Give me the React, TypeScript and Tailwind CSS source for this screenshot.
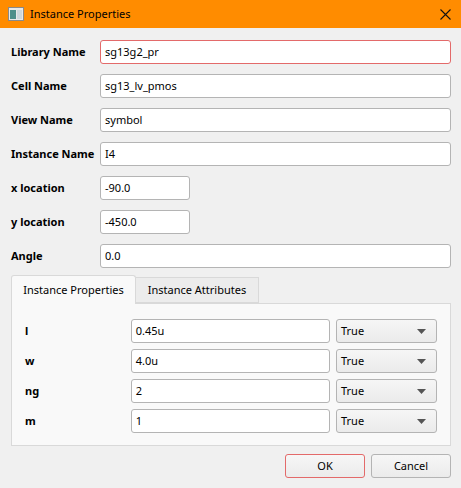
import React from 'react'

const font = { fontFamily: '"Segoe UI", "Noto Sans", "Open Sans", sans-serif' }

function Field({ value, width = 'flex-1', invalid = false }: { value: string; width?: string; invalid?: boolean }) {
  return (
    <div
      className={`${width} h-[24px] flex items-center px-[4px] bg-white rounded-[3px] border text-[11px] text-black whitespace-nowrap ${
        invalid ? 'border-[#e36a6a]' : 'border-[#b4b4b4]'
      }`}
    >
      {value}
    </div>
  )
}

function FormRow({ label, value, width, invalid }: { label: string; value: string; width?: string; invalid?: boolean }) {
  return (
    <div className="flex items-center h-[24px]">
      <div className="w-[89px] text-[11px] font-bold text-black whitespace-nowrap">{label}</div>
      <Field value={value} width={width} invalid={invalid} />
    </div>
  )
}

function Combo() {
  return (
    <div className="w-[101px] h-[24px] flex items-center justify-between pl-[4px] pr-[10px] rounded-[3px] border border-[#b4b4b4] bg-gradient-to-b from-[#f6f6f6] to-[#ebebeb] text-[11px] text-black">
      <span>True</span>
      <svg width="9" height="5" viewBox="0 0 9 5">
        <path d="M0 0 L9 0 L4.5 5 Z" fill="#555" />
      </svg>
    </div>
  )
}

const props = [
  { name: 'l', value: '0.45u' },
  { name: 'w', value: '4.0u' },
  { name: 'ng', value: '2' },
  { name: 'm', value: '1' },
]

export default function App() {
  return (
    <div className="w-[461px] h-[488px] bg-[#f0f0f0] flex flex-col" style={font}>
      <div className="h-[28px] bg-[#ff8c00] flex items-center pl-[8px] pr-[10px] shrink-0">
        <svg width="16" height="14" viewBox="0 0 16 14" className="mr-[6px]">
          <rect x="0.5" y="0.5" width="15" height="13" fill="#e8e8e8" stroke="#8a8a8a" />
          <rect x="2" y="3" width="6" height="9" fill="#4d8f8a" />
          <rect x="9" y="3" width="5" height="9" fill="#cfd8dc" />
        </svg>
        <span className="text-[11px] text-black flex-1">Instance Properties</span>
        <svg width="11" height="11" viewBox="0 0 11 11">
          <path d="M0.5 0.5 L10.5 10.5 M10.5 0.5 L0.5 10.5" stroke="#111" strokeWidth="1.1" />
        </svg>
      </div>

      <div className="flex flex-col pl-[11px] pr-[10px] pt-[12px]">
        <div className="flex flex-col gap-[10px]">
          <FormRow label="Library Name" value="sg13g2_pr" invalid />
          <FormRow label="Cell Name" value="sg13_lv_pmos" />
          <FormRow label="View Name" value="symbol" />
          <FormRow label="Instance Name" value="I4" />
          <FormRow label="x location" value="-90.0" width="w-[90px]" />
          <FormRow label="y location" value="-450.0" width="w-[90px]" />
          <FormRow label="Angle" value="0.0" />
        </div>

        <div className="mt-[7px] flex flex-col">
          <div className="flex items-end h-[28px]">
            <div className="w-[125px] h-[29px] -mb-px z-10 flex items-center justify-center bg-[#f9f9f9] border border-b-0 border-[#d9d9d9] rounded-t-[3px] text-[11px] text-black">
              Instance Properties
            </div>
            <div className="w-[123px] h-[26px] flex items-center justify-center bg-[#ececec] border border-l-0 border-[#d9d9d9] text-[11px] text-black">
              Instance Attributes
            </div>
          </div>
          <div className="h-[143px] bg-[#f9f9f9] border border-[#d9d9d9] pt-[15px] pl-[13px] pr-[13px] flex flex-col gap-[6px]">
            {props.map((p) => (
              <div key={p.name} className="flex items-center h-[24px]">
                <div className="w-[106px] text-[11px] font-bold text-black">{p.name}</div>
                <Field value={p.value} width="w-[200px]" />
                <div className="ml-[6px]">
                  <Combo />
                </div>
              </div>
            ))}
          </div>
        </div>

        <div className="flex justify-end gap-[6px] mt-[8px]">
          <button className="w-[80px] h-[24px] rounded-[3px] border border-[#e36a6a] bg-gradient-to-b from-[#f6f6f6] to-[#ebebeb] text-[11px] text-black">
            OK
          </button>
          <button className="w-[80px] h-[24px] rounded-[3px] border border-[#b4b4b4] bg-gradient-to-b from-[#f6f6f6] to-[#ebebeb] text-[11px] text-black">
            Cancel
          </button>
        </div>
      </div>
    </div>
  )
}
